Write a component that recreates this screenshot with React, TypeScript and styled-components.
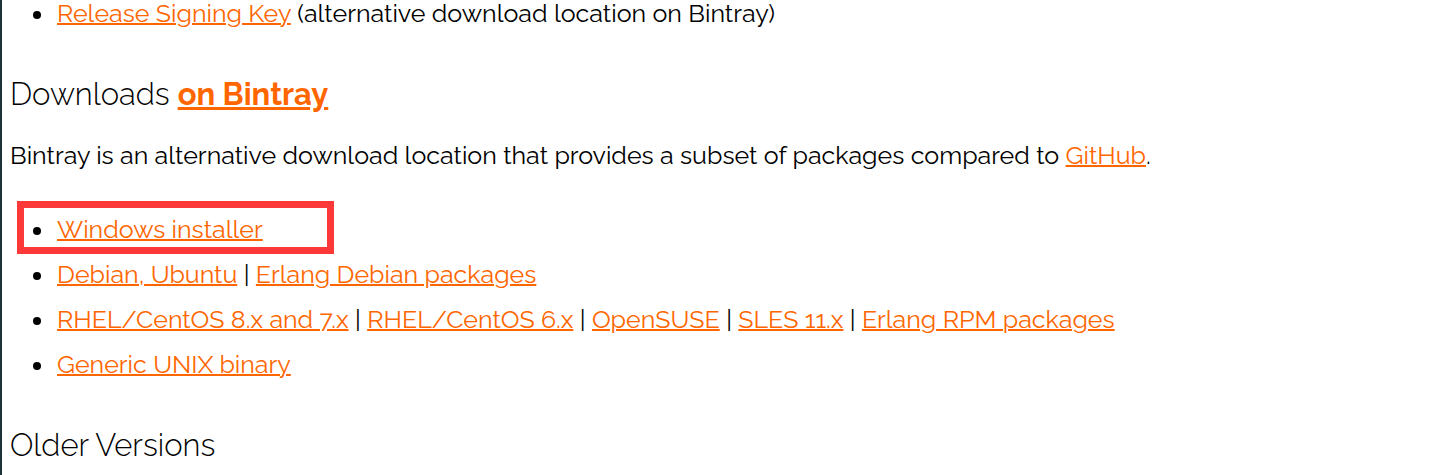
import React from "react";
import styled, { createGlobalStyle } from "styled-components";

const GlobalStyle = createGlobalStyle`
  *, *::before, *::after { box-sizing: border-box; }
  body { margin: 0; background: #fff; }
`;

const Page = styled.main`
  display: flex;
  flex-direction: column;
  min-height: 100vh;
  padding: 0 8px;
  border-left: 2px solid #1f323b;
  color: #000;
  font-family: Raleway, "Open Sans", "Liberation Sans", sans-serif;
  font-size: 25px;
  line-height: 26px;
`;

const Heading = styled.h2`
  margin: 48px 0 28px;
  font-size: 31px;
  font-weight: 300;
  line-height: 40px;
`;

const Paragraph = styled.p`
  margin: 0 0 48px;
`;

const List = styled.ul`
  display: flex;
  flex-direction: column;
  gap: 19px;
  margin: 0;
  padding-left: 47px;
  list-style: none;
`;

const Item = styled.li`
  position: relative;

  &::before {
    content: "";
    position: absolute;
    top: 11px;
    left: -24px;
    width: 8px;
    height: 8px;
    border-radius: 50%;
    background: #000;
  }
`;

const Highlight = styled.span`
  position: absolute;
  top: -15px;
  left: -40px;
  width: 317px;
  height: 53px;
  border: 7px solid #fc3838;
  pointer-events: none;
`;

const Link = styled.a<{ $strong?: boolean }>`
  color: #f60;
  font-weight: ${({ $strong }) => ($strong ? 700 : "inherit")};
  text-decoration: underline;
  text-decoration-thickness: ${({ $strong }) => ($strong ? "3px" : "2px")};
`;

const packages: { highlighted?: boolean; links: string[] }[] = [
  { highlighted: true, links: ["Windows installer"] },
  { links: ["Debian, Ubuntu", "Erlang Debian packages"] },
  {
    links: [
      "RHEL/CentOS 8.x and 7.x",
      "RHEL/CentOS 6.x",
      "OpenSUSE",
      "SLES 11.x",
      "Erlang RPM packages",
    ],
  },
  { links: ["Generic UNIX binary"] },
];

export default function App() {
  return (
    <>
      <GlobalStyle />
      <Page>
        <List>
          <Item>
            <Link href="#signing-key">Release Signing Key</Link> (alternative
            download location on Bintray)
          </Item>
        </List>
        <Heading>
          Downloads{" "}
          <Link href="#bintray" $strong>
            on Bintray
          </Link>
        </Heading>
        <Paragraph>
          Bintray is an alternative download location that provides a subset of
          packages compared to <Link href="#github">GitHub</Link>.
        </Paragraph>
        <List>
          {packages.map(({ highlighted, links }) => (
            <Item key={links[0]}>
              {links.map((label, i) => (
                <React.Fragment key={label}>
                  {i > 0 && " | "}
                  <Link href="#packages">{label}</Link>
                </React.Fragment>
              ))}
              {highlighted && <Highlight aria-hidden="true" />}
            </Item>
          ))}
        </List>
        <Heading>Older Versions</Heading>
      </Page>
    </>
  );
}
